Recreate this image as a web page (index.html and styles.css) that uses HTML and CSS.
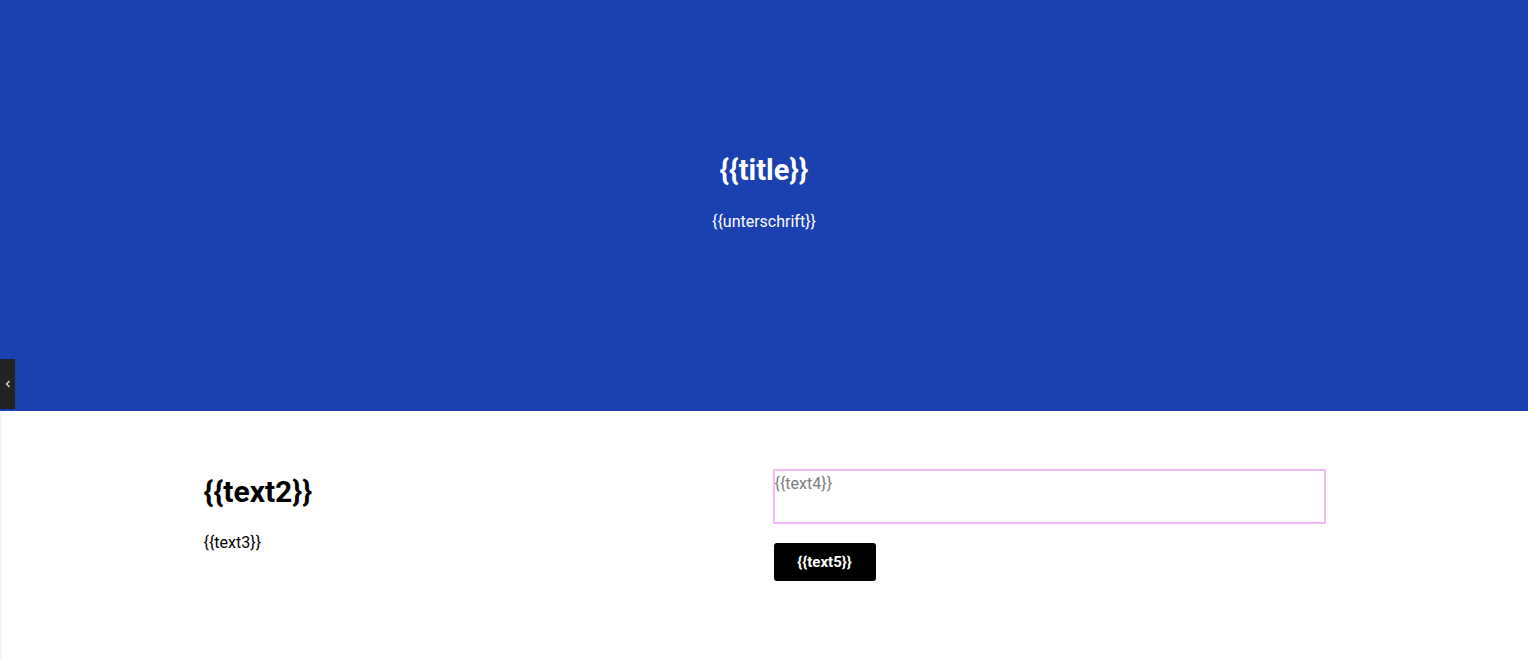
FILE: index.html
```html
<!DOCTYPE html>
<html>
<head>
<meta charset="utf-8">
<link rel="stylesheet" href="styles.css">
</head>
<body>
<div class="sidetab"><svg width="6" height="8" viewBox="0 0 6 8"><path d="M4.5 1 L1.5 4 L4.5 7" fill="none" stroke="#ddd" stroke-width="1.3"/></svg></div>
<header class="hero">
  <h1 class="title">{{title}}</h1>
  <p class="subtitle">{{unterschrift}}</p>
</header>
<main class="content">
  <div class="grid">
    <div class="col-left">
      <h2 class="heading">{{text2}}</h2>
      <p class="body">{{text3}}</p>
    </div>
    <div class="col-right">
      <div class="field">{{text4}}</div>
      <button class="btn">{{text5}}</button>
    </div>
  </div>
</main>
</body>
</html>
```
FILE: styles.css
```css
html, body { margin: 0; padding: 0; }
body {
  font-family: Roboto, "Liberation Sans", sans-serif;
  background: #fff;
  height: 659px;
  overflow: hidden;
  box-shadow: inset 3px 0 3px -2px rgba(0,0,0,0.08);
}
.hero {
  background: #1b40b0;
  height: 411px;
  display: flex;
  flex-direction: column;
  align-items: center;
  justify-content: flex-start;
  color: #fff;
  padding-top: 152px;
  box-sizing: border-box;
}
.title {
  margin: 0;
  font-size: 29px;
  font-weight: 700;
  line-height: 36px;
}
.subtitle {
  margin: 24px 0 0;
  font-size: 16px;
  line-height: 20px;
}
.sidetab {
  position: absolute;
  left: 0;
  top: 359px;
  width: 15px;
  height: 50px;
  background: #222325;
  display: flex;
  align-items: center;
  justify-content: center;
}
.content { padding-top: 58px; }
.grid {
  width: 1122px;
  margin: 0 auto;
  display: grid;
  grid-template-columns: 552px 552px;
  column-gap: 18px;
  padding-left: 1px;
}
.heading {
  margin: 5px 0 0;
  font-size: 30px;
  font-weight: 700;
  line-height: 36px;
  color: #000;
}
.body {
  margin: 23px 0 0;
  font-size: 16px;
  line-height: 20px;
  color: #000;
}
.field {
  height: 55px;
  border: 2px solid #f0b9f7;
  box-sizing: border-box;
  color: #7d7d7d;
  font-size: 16px;
  line-height: 26px;
  margin-left: -1px;
}
.btn {
  margin-top: 19px;
  width: 102px;
  height: 38px;
  background: #000;
  color: #fff;
  border: none;
  border-radius: 3px;
  font-family: Roboto, "Liberation Sans", sans-serif;
  font-size: 15px;
  font-weight: 700;
  padding: 0;
}
```
